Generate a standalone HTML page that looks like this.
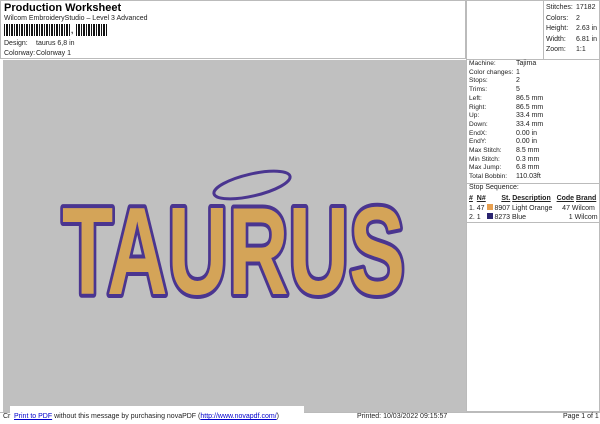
<!DOCTYPE html><html><head><style>
body{margin:0;width:600px;height:424px;background:#fff;font-family:"Liberation Sans",sans-serif;font-size:7px;color:#222;position:relative;overflow:hidden}
.a{position:absolute;white-space:nowrap}
.bc{position:absolute;left:4px;top:24px;height:12px;width:104px;background:repeating-linear-gradient(90deg,#111 0 1px,#fff 1px 2px,#111 2px 4px,#fff 4px 5px)}
</style></head><body>
<div class="a" style="left:0;top:0;width:466px;height:59px;border:1px solid #bbb;box-sizing:border-box"></div>
<div class="a" style="left:4px;top:2px;font-size:11px;font-weight:bold;color:#000">Production Worksheet</div>
<div class="a" style="left:4px;top:15px">Wilcom EmbroideryStudio – Level 3 Advanced</div>
<div class="bc" style="width:66px"></div><div class="a" style="left:71px;top:26px;font-size:8px;font-weight:bold">,</div>
<div class="bc" style="left:76px;width:32px"></div>
<div class="a" style="left:4px;top:40px">Design:</div><div class="a" style="left:36px;top:40px">taurus 6,8 in</div>
<div class="a" style="left:4px;top:50px">Colorway:</div><div class="a" style="left:36px;top:50px">Colorway 1</div>
<div class="a" style="left:3px;top:60px;width:463px;height:352px;background:#c0c0c0"></div>
<svg class="a" style="left:0;top:0" width="600" height="424">
<ellipse cx="252" cy="185" rx="39" ry="11" transform="rotate(-13 252 185)" fill="none" stroke="#4a3590" stroke-width="3"/>
<text x="62" y="294" textLength="343" lengthAdjust="spacingAndGlyphs" font-family="Liberation Sans" font-weight="bold" font-size="124" fill="#d4a458" stroke="#4a3590" stroke-width="8" stroke-linejoin="round" paint-order="stroke">TAURUS</text>
</svg>
<div class="a" style="left:466px;top:0;width:134px;height:412px;border:1px solid #bbb;box-sizing:border-box"></div>
<div class="a" style="left:543px;top:0;width:1px;height:59px;background:#bbb"></div>
<div class="a" style="left:466px;top:59px;width:134px;height:1px;background:#bbb"></div>
<div class="a" style="left:546px;top:3px;line-height:10.5px">Stitches:<br>Colors:<br>Height:<br>Width:<br>Zoom:</div>
<div class="a" style="left:576px;top:3px;line-height:10.5px">17182<br>2<br>2.63 in<br>6.81 in<br>1:1</div>
<div class="a" style="left:469px;top:60px;line-height:8.7px;font-size:6.6px">Machine:<br>Color changes:<br>Stops:<br>Trims:<br>Left:<br>Right:<br>Up:<br>Down:<br>EndX:<br>EndY:<br>Max Stitch:<br>Min Stitch:<br>Max Jump:<br>Total Bobbin:</div>
<div class="a" style="left:516px;top:60px;line-height:8.7px">Tajima<br>1<br>2<br>5<br>86.5 mm<br>86.5 mm<br>33.4 mm<br>33.4 mm<br>0.00 in<br>0.00 in<br>8.5 mm<br>0.3 mm<br>6.8 mm<br>110.03ft</div>
<div class="a" style="left:466px;top:183px;width:134px;height:1px;background:#bbb"></div>
<div class="a" style="left:469px;top:184px">Stop Sequence:</div>
<div class="a" style="left:469px;top:194px;line-height:9.5px">
<span style="font-weight:bold;text-decoration:underline">#</span>&nbsp;&nbsp;<span style="font-weight:bold;text-decoration:underline">N#</span>&nbsp;&nbsp;&nbsp;&nbsp;&nbsp;&nbsp;&nbsp;&nbsp;<span style="font-weight:bold;text-decoration:underline">St.</span> <span style="font-weight:bold;text-decoration:underline">Description</span>&nbsp;&nbsp;&nbsp;<span style="font-weight:bold;text-decoration:underline">Code</span> <span style="font-weight:bold;text-decoration:underline">Brand</span><br>
1.&nbsp;47 <span style="display:inline-block;width:6px;height:6px;background:#e8a050"></span> 8907 Light Orange&nbsp;&nbsp;&nbsp;&nbsp;&nbsp;47 Wilcom<br>
2.&nbsp;1&nbsp;&nbsp;&nbsp;<span style="display:inline-block;width:6px;height:6px;background:#2a2470"></span> 8273 Blue&nbsp;&nbsp;&nbsp;&nbsp;&nbsp;&nbsp;&nbsp;&nbsp;&nbsp;&nbsp;&nbsp;&nbsp;&nbsp;&nbsp;&nbsp;&nbsp;&nbsp;&nbsp;&nbsp;&nbsp;&nbsp;&nbsp;1 Wilcom</div>
<div class="a" style="left:466px;top:222px;width:134px;height:1px;background:#bbb"></div>
<div class="a" style="left:0;top:412px;width:600px;height:12px;border-top:1px solid #bbb;box-sizing:border-box"></div>
<div class="a" style="left:10px;top:406px;width:294px;height:18px;background:#fff"></div>
<div class="a" style="left:3px;top:413px">Cr</div>
<div class="a" style="left:14px;top:413px"><span style="color:#00c;text-decoration:underline">Print to PDF</span> without this message by purchasing novaPDF (<span style="color:#00c;text-decoration:underline">http://www.novapdf.com/</span>)</div>
<div class="a" style="left:357px;top:413px">Printed: 10/03/2022 09:15:57</div>
<div class="a" style="left:563px;top:413px">Page 1 of 1</div>
</body></html>
